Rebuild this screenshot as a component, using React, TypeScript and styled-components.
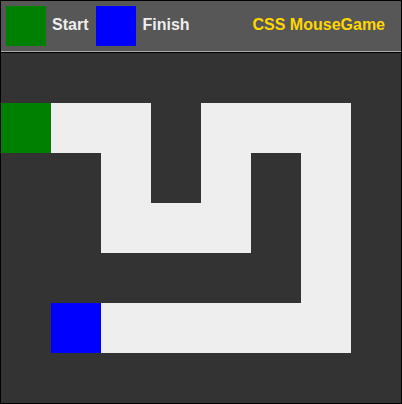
import React from 'react';
import styled, { createGlobalStyle } from 'styled-components';

const GlobalStyle = createGlobalStyle`
  html, body {
    margin: 0;
    padding: 0;
    background: #ffffff;
  }
  body {
    font-family: "Liberation Sans", Arial, sans-serif;
  }
`;

const Frame = styled.div`
  width: 400px;
  border: 1px solid #000;
  background: #333;
`;

const Header = styled.div`
  height: 51px;
  box-sizing: border-box;
  padding: 5px 16px 5px 5px;
  display: flex;
  align-items: center;
  background: #575757;
  border-bottom: 1px solid #aaa;
`;

const Swatch = styled.div<{ $color: string }>`
  width: 40px;
  height: 40px;
  background: ${(p) => p.$color};
`;

const Label = styled.span<{ $gold?: boolean }>`
  font-size: 16px;
  font-weight: bold;
  line-height: 16px;
  margin: -3px 8px 0 6px;
  color: ${(p) => (p.$gold ? '#ffd700' : '#eeeeee')};
`;

const Title = styled(Label)`
  margin: -3px 0 0 auto;
`;

const Maze = styled.div`
  display: grid;
  grid-template-columns: repeat(8, 50px);
  grid-template-rows: repeat(7, 50px);
  border-top: 1px solid #000;
`;

const cellColors: Record<string, string> = {
  '#': '#333333',
  '.': '#eeeeee',
  S: '#008000',
  F: '#0000ff',
};

const Cell = styled.div<{ $kind: string }>`
  background: ${(p) => cellColors[p.$kind]};
`;

const layout = [
  '########',
  'S..#...#',
  '##.#.#.#',
  '##...#.#',
  '######.#',
  '#F.....#',
  '########',
];

export default function App() {
  return (
    <>
      <GlobalStyle />
      <Frame>
        <Header>
          <Swatch $color="#008000" />
          <Label>Start</Label>
          <Swatch $color="#0000ff" />
          <Label>Finish</Label>
          <Title $gold>CSS MouseGame</Title>
        </Header>
        <Maze>
          {layout.flatMap((row, r) =>
            row.split('').map((kind, c) => <Cell key={`${r}-${c}`} $kind={kind} />)
          )}
        </Maze>
      </Frame>
    </>
  );
}
